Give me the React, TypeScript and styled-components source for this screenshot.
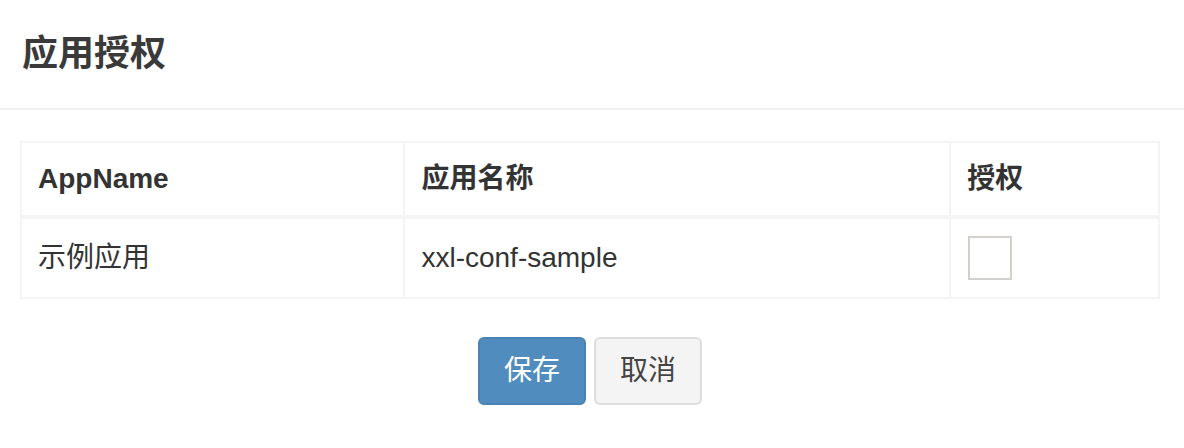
import React from 'react';
import styled, { createGlobalStyle } from 'styled-components';

type AppRow = {
  appName: string;
  title: string;
  granted: boolean;
};

const rows: AppRow[] = [{ appName: '示例应用', title: 'xxl-conf-sample', granted: false }];

const GlobalStyle = createGlobalStyle`
  html, body {
    margin: 0;
    padding: 0;
    background: #fff;
  }
  body {
    font-family: "Liberation Sans", "Noto Sans CJK SC", sans-serif;
    font-size: 28px;
    color: #333;
  }
`;

const Modal = styled.div`
  width: 1184px;
  display: flex;
  flex-direction: column;
`;

const Header = styled.div`
  padding: 28px 22px;
  border-bottom: 2px solid #f2f2f2;
`;

const Title = styled.h4`
  margin: 0;
  font-size: 36px;
  line-height: 52px;
  font-weight: 700;
  color: #3a3a3a;
`;

const Body = styled.div`
  padding: 31px 24px 30px 20px;
`;

const Table = styled.table`
  width: 1140px;
  border-collapse: collapse;
  border-spacing: 0;
  border: 2px solid #f4f4f4;
`;

const HeadCell = styled.th<{ $width: number }>`
  width: ${(p) => p.$width}px;
  box-sizing: border-box;
  text-align: left;
  font-weight: 700;
  padding: 16px;
  line-height: 40px;
  border: 2px solid #f4f4f4;
  border-bottom-width: 4px;
`;

const Cell = styled.td`
  padding: 17px 16px;
  line-height: 40px;
  border: 2px solid #f4f4f4;
  vertical-align: middle;
`;

const CheckBox = styled.span<{ $checked: boolean }>`
  display: block;
  margin-left: 1px;
  width: 44px;
  height: 44px;
  box-sizing: border-box;
  border: 2px solid #d3d0cb;
  background: ${(p) => (p.$checked ? '#508cbd' : '#fff')};
`;

const Footer = styled.div`
  display: flex;
  justify-content: center;
  gap: 8px;
  padding: 8px 4px 0 0;
`;

const Button = styled.button<{ $primary?: boolean }>`
  font-family: inherit;
  font-size: 28px;
  line-height: 40px;
  padding: 12px 24px;
  border-radius: 6px;
  border: 2px solid ${(p) => (p.$primary ? '#4a83b3' : '#ddd')};
  background: ${(p) => (p.$primary ? '#508cbd' : '#f4f4f4')};
  color: ${(p) => (p.$primary ? '#fff' : '#444')};
  cursor: pointer;
`;

export default function App() {
  return (
    <>
      <GlobalStyle />
      <Modal>
        <Header>
          <Title>应用授权</Title>
        </Header>
        <Body>
          <Table>
            <thead>
              <tr>
                <HeadCell $width={384}>AppName</HeadCell>
                <HeadCell $width={547}>应用名称</HeadCell>
                <HeadCell $width={209}>授权</HeadCell>
              </tr>
            </thead>
            <tbody>
              {rows.map((row) => (
                <tr key={row.title}>
                  <Cell>{row.appName}</Cell>
                  <Cell>{row.title}</Cell>
                  <Cell>
                    <CheckBox $checked={row.granted} />
                  </Cell>
                </tr>
              ))}
            </tbody>
          </Table>
        </Body>
        <Footer>
          <Button $primary>保存</Button>
          <Button>取消</Button>
        </Footer>
      </Modal>
    </>
  );
}
